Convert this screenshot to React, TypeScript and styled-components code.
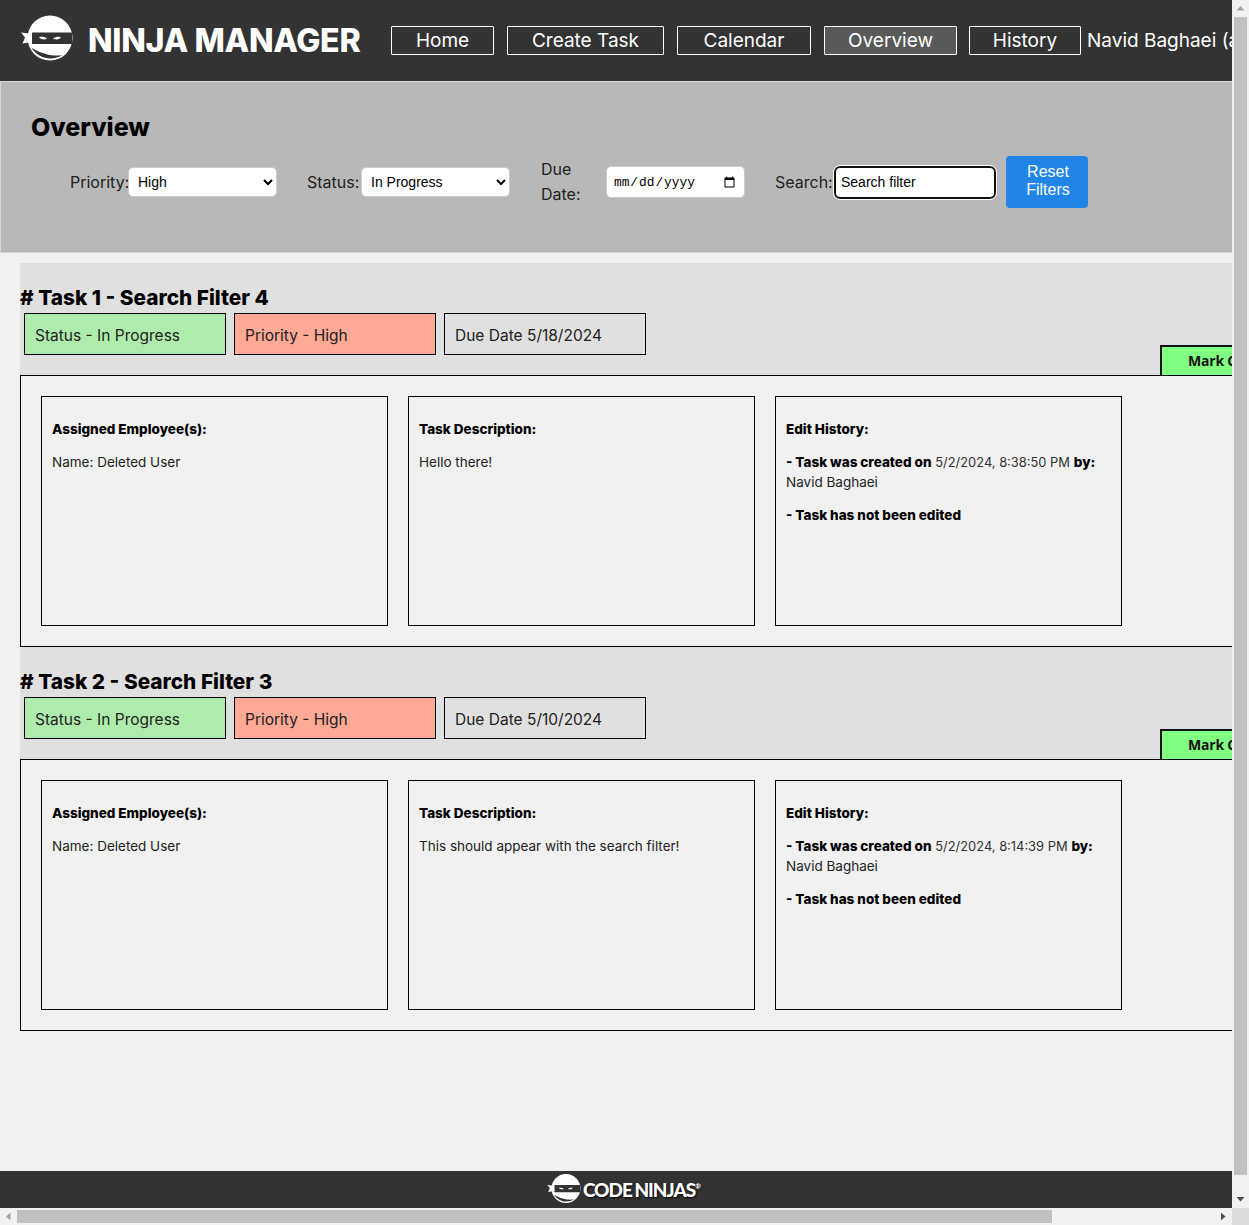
import React from 'react';
import styled, { createGlobalStyle } from 'styled-components';

const GlobalStyle = createGlobalStyle`
  html, body {
    margin: 0;
    padding: 0;
    height: 100%;
    overflow: hidden;
    background: #f1f1f1;
  }
  * {
    box-sizing: border-box;
  }
`;

const Shell = styled.div`
  width: 1249px;
  height: 1225px;
  display: grid;
  grid-template-columns: 1232px 17px;
  grid-template-rows: 1208px 17px;
  background: #f1f1f1;
  font-family: Inter, 'Liberation Sans', sans-serif;
  color: #111;
`;

const Viewport = styled.div`
  overflow: hidden;
`;

const Page = styled.div`
  width: 1426px;
`;

const ScrollBar = styled.div<{ $vertical?: boolean }>`
  display: flex;
  flex-direction: ${(p) => (p.$vertical ? 'column' : 'row')};
  background: #f1f1f1;
`;

const ScrollArrow = styled.div`
  flex: none;
  width: 17px;
  height: 17px;
  display: flex;
  align-items: center;
  justify-content: center;
`;

const ScrollThumb = styled.div<{ $vertical?: boolean; $length: number }>`
  flex: none;
  background: #c1c1c1;
  ${(p) =>
    p.$vertical
      ? `width: 13px; height: ${p.$length}px; margin: 0 2px;`
      : `height: 13px; width: ${p.$length}px; margin: 2px 0;`}
`;

const ScrollSpacer = styled.div`
  flex: 1;
`;

const ScrollCorner = styled.div`
  background: #dcdcdc;
`;

const Header = styled.header`
  height: 81px;
  background: #333333;
  display: flex;
  align-items: center;
  padding-left: 19px;
  white-space: nowrap;
`;

const Brand = styled.div`
  display: flex;
  align-items: center;
  width: 372px;
`;

const BrandName = styled.span`
  margin-left: 13px;
  color: #fff;
  font-size: 32.2px;
  font-weight: 800;
  letter-spacing: -0.35px;
`;

const Nav = styled.nav`
  display: flex;
  align-items: center;
`;

const NavItem = styled.a<{ $width: number; $gap: number; $active?: boolean }>`
  display: flex;
  align-items: center;
  justify-content: center;
  width: ${(p) => p.$width}px;
  height: 29px;
  margin-right: ${(p) => p.$gap}px;
  border: 1px solid #fff;
  border-radius: 1px;
  background: ${(p) => (p.$active ? '#595959' : 'transparent')};
  color: #fff;
  font-size: 19px;
`;

const UserName = styled.span`
  color: #fff;
  font-size: 19px;
`;

const FilterPanel = styled.section`
  height: 172px;
  background: #b8b8b8;
  border: 1px solid #d6d6d6;
  padding: 29px 0 0 30px;
`;

const PanelTitle = styled.h1`
  margin: 0;
  font-size: 25px;
  line-height: 32px;
  font-weight: 800;
  color: #000;
`;

const FilterRow = styled.div`
  display: flex;
  align-items: center;
  height: 52px;
  margin-top: 13px;
  padding-left: 39px;
`;

const FilterLabel = styled.label<{ $width: number; $gap?: number }>`
  width: ${(p) => p.$width}px;
  margin-left: ${(p) => p.$gap ?? 0}px;
  flex: none;
  font-size: 16px;
  line-height: 25px;
  color: #222;
`;

const FilterSelect = styled.select`
  width: 149px;
  height: 30px;
  flex: none;
  padding: 0 0 0 5px;
  background-color: #fff;
  border: 1px solid #ccc;
  border-radius: 5px;
  font-family: 'Liberation Sans', Arial, sans-serif;
  font-size: 14px;
  color: #000;
`;

const DateField = styled.input`
  width: 139px;
  height: 32px;
  flex: none;
  padding: 0 6px;
  background: #fff;
  border: 1px solid #ccc;
  border-radius: 5px;
  font-family: 'Liberation Mono', monospace;
  font-size: 12.8px;
  color: #000;
`;

const SearchField = styled.input`
  width: 162px;
  height: 33px;
  flex: none;
  padding: 0 5px;
  background: #fff;
  border: 2px solid #111;
  border-radius: 6px;
  outline: 1px solid #fff;
  font-family: 'Liberation Sans', Arial, sans-serif;
  font-size: 14px;
  color: #000;

  &::placeholder {
    color: #000;
    opacity: 1;
  }
`;

const ResetButton = styled.button`
  width: 82px;
  height: 52px;
  margin-left: 10px;
  flex: none;
  padding: 0 13px 2px 15px;
  background: #2185e8;
  border: 0;
  border-radius: 4px;
  color: #fff;
  font-family: 'Liberation Sans', Arial, sans-serif;
  font-size: 16px;
  line-height: 18px;
`;

const TaskList = styled.main`
  margin: 10px 0 0 20px;
  min-height: 925px;
`;

const TaskBand = styled.div`
  height: 112px;
  padding-top: 22px;
  background: #e0e0e0;
`;

const TaskTitle = styled.h2`
  margin: 0 0 2px;
  font-size: 20.8px;
  line-height: 26px;
  font-weight: 800;
  color: #000;
`;

const BandRow = styled.div`
  display: flex;
  height: 62px;
`;

const Badge = styled.div<{ $color: string }>`
  width: 202px;
  height: 42px;
  margin: 0 4px;
  padding: 2px 0 0 10px;
  display: flex;
  align-items: center;
  background: ${(p) => p.$color};
  border: 1px solid #000;
  font-size: 15.5px;
  color: #222;
`;

const CompleteButton = styled.button`
  align-self: flex-end;
  width: 170px;
  height: 30px;
  margin-left: 510px;
  padding: 0 0 2px 26px;
  text-align: left;
  background: #80ff80;
  border: 2px solid #111;
  border-bottom: 0;
  border-right: 0;
  font-family: 'Open Sans', Inter, sans-serif;
  font-size: 14px;
  font-weight: 700;
  letter-spacing: -0.2px;
  color: #111;
  white-space: nowrap;
`;

const TaskBody = styled.div`
  height: 272px;
  padding: 20px;
  display: flex;
  gap: 20px;
  border: 1px solid #000;
  border-right: 0;
`;

const InfoCard = styled.article`
  width: 347px;
  height: 230px;
  padding: 22px 10px 0;
  border: 1px solid #000;
  font-size: 13.5px;
  line-height: 20px;
  color: #222;
`;

const CardLine = styled.p`
  margin: 0 0 13px;
`;

const Strong = styled.b`
  font-weight: 800;
  color: #000;
`;

const Stamp = styled.span`
  font-size: 12.9px;
  line-height: 1;
  color: #333;
`;

const Footer = styled.footer`
  position: sticky;
  bottom: 0;
  left: 0;
  width: 1232px;
  height: 37px;
  background: #333333;
  display: flex;
  align-items: center;
  justify-content: center;
  padding-left: 15px;
`;

const FooterName = styled.span`
  margin-left: 1px;
  color: #fff;
  font-family: Lato, 'Open Sans', sans-serif;
  font-size: 19px;
  font-weight: 900;
  letter-spacing: -1px;
  word-spacing: -1px;
  text-shadow: 1px 1px 2px #000;
`;

const FooterMark = styled.sup`
  font-size: 7px;
  letter-spacing: 0;
  vertical-align: 8px;
  line-height: 0;
`;

const LogoSvg = styled.svg<{ $lift: number }>`
  flex: none;
  margin-bottom: ${(p) => p.$lift}px;
`;

const NinjaLogo: React.FC<{ size: number; lift?: number }> = ({ size, lift = 0 }) => (
  <LogoSvg $lift={lift} width={size} height={(size * 50) / 56} viewBox="0 0 56 50" aria-hidden="true">
    <circle cx="31.5" cy="25.5" r="21" fill="#000" opacity="0.25" />
    <circle cx="31" cy="24" r="22.5" fill="#fff" />
    <path d="M12.5 33.5 C17 41 24 44.5 31.5 44.5 C36 44.5 40 43.2 43.5 41 C38 42.2 25 42 12.5 33.5 Z" fill="#333" />
    <rect x="13" y="18.5" width="40" height="11.5" rx="0.6" fill="#333" />
    <path d="M20 23.2 C23 22.4 26 23 28 24.7 C25 26 22 25.5 20 23.2 Z" fill="#fff" />
    <path d="M42 23.2 C39 22.4 36 23 34 24.7 C37 26 40 25.5 42 23.2 Z" fill="#fff" />
    <path d="M13 20 L2 18.5 L6 23.5 L3.5 29.5 L13 28 Z" fill="#fff" />
  </LogoSvg>
);

const Arrow: React.FC<{ points: string; fill: string }> = ({ points, fill }) => (
  <svg width="9" height="9" viewBox="0 0 9 9" aria-hidden="true">
    <polygon points={points} fill={fill} />
  </svg>
);

const navItems = [
  { label: 'Home', width: 103, gap: 13 },
  { label: 'Create Task', width: 157, gap: 13 },
  { label: 'Calendar', width: 134, gap: 13 },
  { label: 'Overview', width: 133, gap: 12, active: true },
  { label: 'History', width: 112, gap: 6 },
];

const tasks = [
  {
    title: '# Task 1 - Search Filter 4',
    due: '5/18/2024',
    description: 'Hello there!',
    created: '5/2/2024, 8:38:50 PM',
  },
  {
    title: '# Task 2 - Search Filter 3',
    due: '5/10/2024',
    description: 'This should appear with the search filter!',
    created: '5/2/2024, 8:14:39 PM',
  },
];

const App: React.FC = () => (
  <Shell>
    <GlobalStyle />
    <Viewport>
      <Page>
        <Header>
          <Brand>
            <NinjaLogo size={56} lift={4} />
            <BrandName>NINJA MANAGER</BrandName>
          </Brand>
          <Nav>
            {navItems.map((item) => (
              <NavItem key={item.label} $width={item.width} $gap={item.gap} $active={item.active}>
                {item.label}
              </NavItem>
            ))}
            <UserName>Navid Baghaei (admin)</UserName>
          </Nav>
        </Header>

        <FilterPanel>
          <PanelTitle>Overview</PanelTitle>
          <FilterRow>
            <FilterLabel $width={58}>Priority:</FilterLabel>
            <FilterSelect defaultValue="High">
              <option>High</option>
              <option>Medium</option>
              <option>Low</option>
            </FilterSelect>
            <FilterLabel $width={54} $gap={30}>Status:</FilterLabel>
            <FilterSelect defaultValue="In Progress">
              <option>In Progress</option>
              <option>Not Started</option>
              <option>Completed</option>
            </FilterSelect>
            <FilterLabel $width={65} $gap={31}>Due Date:</FilterLabel>
            <DateField type="date" />
            <FilterLabel $width={59} $gap={30}>Search:</FilterLabel>
            <SearchField type="text" placeholder="Search filter" />
            <ResetButton>Reset Filters</ResetButton>
          </FilterRow>
        </FilterPanel>

        <TaskList>
          {tasks.map((task) => (
            <section key={task.title}>
              <TaskBand>
                <TaskTitle>{task.title}</TaskTitle>
                <BandRow>
                  <Badge $color="#aeecab">Status - In Progress</Badge>
                  <Badge $color="#ffa996">Priority - High</Badge>
                  <Badge $color="#e0e0e0">Due Date {task.due}</Badge>
                  <CompleteButton>Mark Complete</CompleteButton>
                </BandRow>
              </TaskBand>
              <TaskBody>
                <InfoCard>
                  <CardLine><Strong>Assigned Employee(s):</Strong></CardLine>
                  <CardLine>Name: Deleted User</CardLine>
                </InfoCard>
                <InfoCard>
                  <CardLine><Strong>Task Description:</Strong></CardLine>
                  <CardLine>{task.description}</CardLine>
                </InfoCard>
                <InfoCard>
                  <CardLine><Strong>Edit History:</Strong></CardLine>
                  <CardLine>
                    <Strong>- Task was created on</Strong> <Stamp>{task.created}</Stamp> <Strong>by:</Strong> Navid Baghaei
                  </CardLine>
                  <CardLine><Strong>- Task has not been edited</Strong></CardLine>
                </InfoCard>
              </TaskBody>
            </section>
          ))}
        </TaskList>

        <Footer>
          <NinjaLogo size={36} />
          <FooterName>CODE NINJAS<FooterMark>®</FooterMark></FooterName>
        </Footer>
      </Page>
    </Viewport>

    <ScrollBar $vertical>
      <ScrollArrow><Arrow points="0.5,6.5 8.5,6.5 4.5,2" fill="#a3a3a3" /></ScrollArrow>
      <ScrollThumb $vertical $length={1158} />
      <ScrollSpacer />
      <ScrollArrow><Arrow points="0.5,2 8.5,2 4.5,6.5" fill="#505050" /></ScrollArrow>
    </ScrollBar>
    <ScrollBar>
      <ScrollArrow><Arrow points="6.5,0.5 6.5,8.5 2,4.5" fill="#a3a3a3" /></ScrollArrow>
      <ScrollThumb $length={1035} />
      <ScrollSpacer />
      <ScrollArrow><Arrow points="2,0.5 2,8.5 6.5,4.5" fill="#505050" /></ScrollArrow>
    </ScrollBar>
    <ScrollCorner />
  </Shell>
);

export default App;
